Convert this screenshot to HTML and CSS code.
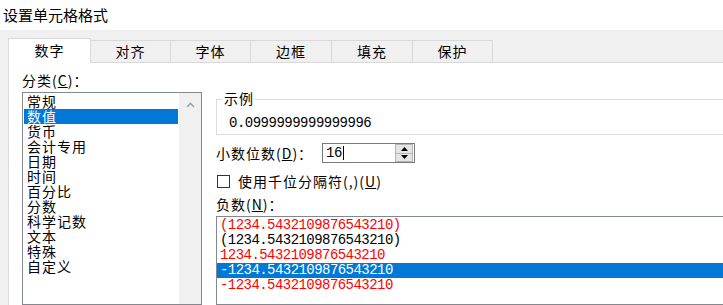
FILE: index.html
```html
<!DOCTYPE html>
<html lang="zh-CN">
<head>
  <meta charset="UTF-8" />
  <title>设置单元格格式</title>
  <link rel="stylesheet" href="styles.css">
</head>
<body>
  <div class="titlebar">设置单元格格式</div>
  <div class="dialog">
    <div class="tabs">
      <div class="tab active">数字</div>
      <div class="tab w80">对齐</div>
      <div class="tab w80">字体</div>
      <div class="tab w81">边框</div>
      <div class="tab w81">填充</div>
      <div class="tab w80">保护</div>
    </div>
    <div class="page">
      <div class="col-left">
        <div class="label">分类(<u>C</u>)：</div>
        <div class="listbox category">
          <div class="items">
            <div class="item">常规</div>
            <div class="item selected">数值</div>
            <div class="item">货币</div>
            <div class="item">会计专用</div>
            <div class="item">日期</div>
            <div class="item">时间</div>
            <div class="item">百分比</div>
            <div class="item">分数</div>
            <div class="item">科学记数</div>
            <div class="item">文本</div>
            <div class="item">特殊</div>
            <div class="item">自定义</div>
          </div>
          <div class="scrollbar">
            <svg width="9" height="6" viewBox="0 0 9 6"><path d="M1 5 L4.5 1.5 L8 5" fill="none" stroke="#a3a3a3" stroke-width="1.6"/></svg>
          </div>
        </div>
      </div>
      <div class="col-right">
        <div class="sample">
          <span class="sample-label">示例</span>
          <div class="sample-value">0.0999999999999996</div>
        </div>
        <div class="decimal-row">
          <div class="decimal-label">小数位数(<u>D</u>)：</div>
          <div class="spin-input">
            <div class="spin-text">16<span class="caret"></span></div>
            <div class="spin-buttons">
              <div class="spin-btn"><svg width="7" height="4" viewBox="0 0 7 4"><path d="M0 4 L3.5 0 L7 4 Z" fill="#000"/></svg></div>
              <div class="spin-btn"><svg width="7" height="4" viewBox="0 0 7 4"><path d="M0 0 L7 0 L3.5 4 Z" fill="#000"/></svg></div>
            </div>
          </div>
        </div>
        <div class="check-row">
          <div class="checkbox"></div>
          <div class="check-label">使用千位分隔符(,)(<u>U</u>)</div>
        </div>
        <div class="label">负数(<u>N</u>)：</div>
        <div class="listbox negative">
          <div class="item red">(1234.5432109876543210)</div>
          <div class="item">(1234.5432109876543210)</div>
          <div class="item red">1234.5432109876543210</div>
          <div class="item selected">-1234.5432109876543210</div>
          <div class="item red">-1234.5432109876543210</div>
        </div>
      </div>
    </div>
  </div>
</body>
</html>
```

FILE: styles.css
```css
* {
  box-sizing: border-box;
}
body {
  margin: 0;
  width: 723px;
  height: 305px;
  overflow: hidden;
  background-color: #f0f0f0;
  color: #000;
  font-family: "Noto Sans CJK SC", "Liberation Sans", sans-serif;
  font-size: 14px;
  letter-spacing: 1px;
}
u {
  text-decoration: underline;
  text-underline-offset: 1px;
}
.titlebar {
  height: 30px;
  line-height: 30px;
  padding-left: 3px;
  font-size: 15px;
  letter-spacing: 0;
  background-color: #fff;
}
.dialog {
  padding: 8px 0 0 8px;
  height: 275px;
  display: flex;
  flex-direction: column;
}
.tabs {
  display: flex;
  align-items: flex-end;
  height: 24px;
}
.tab {
  height: 22px;
  line-height: 21px;
  text-align: center;
  background-color: #f0f0f0;
  border-top: 1px solid #d9d9d9;
  border-right: 1px solid #d9d9d9;
}
.tab.active {
  position: relative;
  z-index: 1;
  width: 83px;
  height: 25px;
  margin-bottom: -1px;
  line-height: 23px;
  background-color: #fff;
  border-left: 1px solid #d9d9d9;
}
.w80 { width: 80px; }
.w81 { width: 81px; }
.page {
  flex: 1;
  display: flex;
  padding-left: 13px;
  background-color: #fff;
  border-top: 1px solid #d9d9d9;
  border-left: 1px solid #d9d9d9;
  overflow: hidden;
}
.label {
  line-height: 15px;
  height: 15px;
}
.col-left {
  width: 180px;
  flex-shrink: 0;
  display: flex;
  flex-direction: column;
  padding-top: 10px;
}
.listbox {
  border: 1px solid #828790;
  background-color: #fff;
  margin-top: 4px;
}
.category {
  flex: 1;
  display: flex;
}
.category .items {
  flex: 1;
  padding: 1px;
}
.item {
  height: 15px;
  line-height: 15px;
  padding-left: 3px;
  white-space: nowrap;
}
.item.selected {
  background-color: #0078d7;
  color: #fff;
}
.scrollbar {
  width: 22px;
  background-color: #f0f0f0;
  display: flex;
  justify-content: center;
  padding-top: 9px;
}
.col-right {
  width: 540px;
  margin-left: 14px;
  display: flex;
  flex-direction: column;
  flex-shrink: 0;
}
.sample {
  position: relative;
  margin-top: 36px;
  height: 36px;
  border: 1px solid #dcdcdc;
}
.sample-label {
  position: absolute;
  top: -9px;
  left: 5px;
  line-height: 15px;
  padding: 0 1px 0 2px;
  background-color: #fff;
}
.sample-value {
  padding: 16px 0 0 12px;
  line-height: 15px;
  font-family: "Liberation Mono", "DejaVu Sans Mono", monospace;
  font-size: 14px;
  letter-spacing: -0.5px;
}
.decimal-row {
  display: flex;
  align-items: center;
  margin-top: 8px;
  height: 20px;
}
.decimal-label {
  width: 106px;
  line-height: 15px;
}
.spin-input {
  width: 93px;
  height: 20px;
  display: flex;
  border: 1px solid #7a7a7a;
  background-color: #fff;
}
.spin-text {
  flex: 1;
  display: flex;
  align-items: center;
  padding-left: 3px;
  font-family: "Liberation Mono", "DejaVu Sans Mono", monospace;
  font-size: 14px;
  letter-spacing: -0.5px;
}
.caret {
  display: inline-block;
  width: 1px;
  height: 14px;
  margin-left: 1px;
  background-color: #000;
}
.spin-buttons {
  width: 18px;
  margin-right: 1px;
  display: flex;
  flex-direction: column;
}
.spin-btn {
  flex: 1;
  display: flex;
  align-items: center;
  justify-content: center;
  background-color: #e5e5e5;
  border: 1px solid #b4b4b4;
}
.spin-btn + .spin-btn {
  border-top: none;
}
.check-row {
  display: flex;
  align-items: center;
  margin-top: 11px;
  height: 15px;
}
.checkbox {
  width: 13px;
  height: 13px;
  margin-left: 1px;
  border: 1px solid #333;
  background-color: #fff;
}
.check-label {
  margin-left: 8px;
  line-height: 15px;
}
.col-right .label {
  margin-top: 8px;
}
.negative {
  flex: 1;
  padding-top: 1px;
  font-family: "Liberation Mono", "DejaVu Sans Mono", monospace;
  font-size: 14px;
  letter-spacing: -0.55px;
}
.negative .item {
  padding-left: 3px;
}
.item.red {
  color: #ff0000;
}
```
